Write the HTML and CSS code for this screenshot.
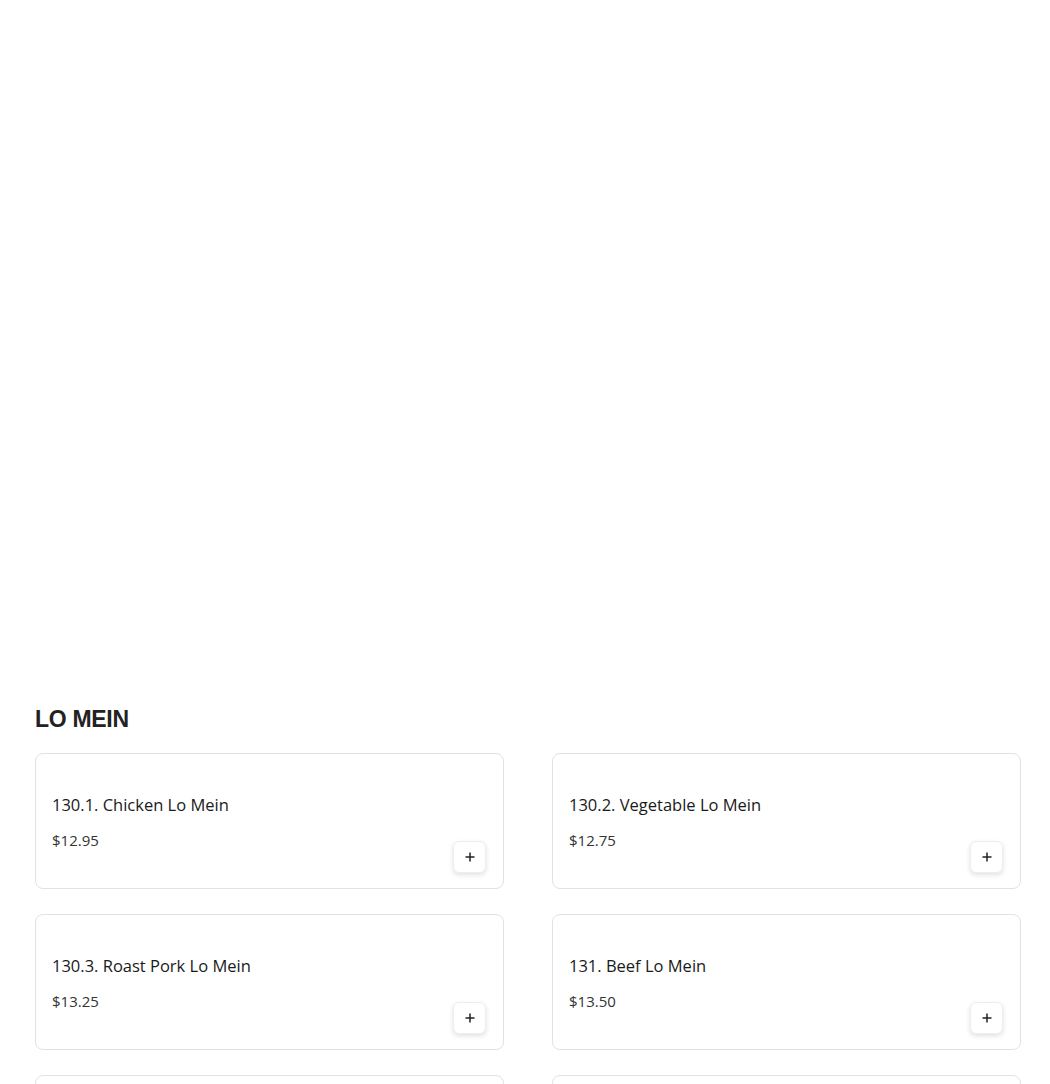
FILE: index.html
```html
<!DOCTYPE html>
<html lang="en">
<head>
  <meta charset="UTF-8" />
  <title>Menu - Lo Mein</title>
  <meta name="viewport" content="width=device-width, initial-scale=1.0" />
  <link rel="stylesheet" href="styles.css">
</head>
<body>

  <!-- Space left by the previous (image) section -->
  <div class="top-space"></div>

  <section class="menu-section">
    <h2 class="section-title">LO MEIN</h2>

    <div class="item-grid">
      <div class="item-card">
        <div class="item-info">
          <div class="item-name">130.1. Chicken Lo Mein</div>
          <div class="item-price">$12.95</div>
        </div>
        <button class="add-button" aria-label="Add">
          <svg width="12" height="12" viewBox="0 0 12 12"><path d="M6 1.5v9M1.5 6h9" stroke="#222" stroke-width="1.5" /></svg>
        </button>
      </div>

      <div class="item-card">
        <div class="item-info">
          <div class="item-name">130.2. Vegetable Lo Mein</div>
          <div class="item-price">$12.75</div>
        </div>
        <button class="add-button" aria-label="Add">
          <svg width="12" height="12" viewBox="0 0 12 12"><path d="M6 1.5v9M1.5 6h9" stroke="#222" stroke-width="1.5" /></svg>
        </button>
      </div>

      <div class="item-card">
        <div class="item-info">
          <div class="item-name">130.3. Roast Pork Lo Mein</div>
          <div class="item-price">$13.25</div>
        </div>
        <button class="add-button" aria-label="Add">
          <svg width="12" height="12" viewBox="0 0 12 12"><path d="M6 1.5v9M1.5 6h9" stroke="#222" stroke-width="1.5" /></svg>
        </button>
      </div>

      <div class="item-card">
        <div class="item-info">
          <div class="item-name">131. Beef Lo Mein</div>
          <div class="item-price">$13.50</div>
        </div>
        <button class="add-button" aria-label="Add">
          <svg width="12" height="12" viewBox="0 0 12 12"><path d="M6 1.5v9M1.5 6h9" stroke="#222" stroke-width="1.5" /></svg>
        </button>
      </div>

      <!-- next row, only its top edge is on screen -->
      <div class="item-card"></div>
      <div class="item-card"></div>
    </div>
  </section>

</body>
</html>
```

FILE: styles.css
```css
body {
  margin: 0;
  font-family: 'Open Sans', 'Noto Sans', sans-serif;
  background-color: white;
  color: #1c1c1c;
}

.top-space {
  height: 700px;
}

.menu-section {
  padding: 0 29px 0 35px;
}

.section-title {
  font-family: 'Liberation Sans', Arial, sans-serif;
  font-size: 23px;
  letter-spacing: -0.3px;
  font-weight: bold;
  color: #222;
  margin: 0 0 15px 0;
  line-height: 38px;
}

.item-grid {
  display: grid;
  grid-template-columns: 469px 469px;
  column-gap: 48px;
  row-gap: 25px;
}

.item-card {
  display: flex;
  justify-content: space-between;
  height: 136px;
  box-sizing: border-box;
  border: 1px solid #e2e2e2;
  border-radius: 8px;
  padding: 16px 17px 15px 16px;
}

.item-info {
  padding-top: 24px;
}

.item-name {
  font-size: 16.5px;
  font-weight: 500;
  line-height: 22px;
  color: #1a1a1a;
}

.item-price {
  font-size: 15px;
  font-weight: 400;
  line-height: 20px;
  color: #333;
  margin-top: 14px;
}

.add-button {
  align-self: flex-end;
  width: 33px;
  height: 32px;
  padding: 0;
  display: flex;
  align-items: center;
  justify-content: center;
  background-color: white;
  border: 1px solid #eeeeee;
  border-radius: 6px;
  box-shadow: 0 2px 5px rgba(0, 0, 0, 0.12);
  cursor: pointer;
}
```
